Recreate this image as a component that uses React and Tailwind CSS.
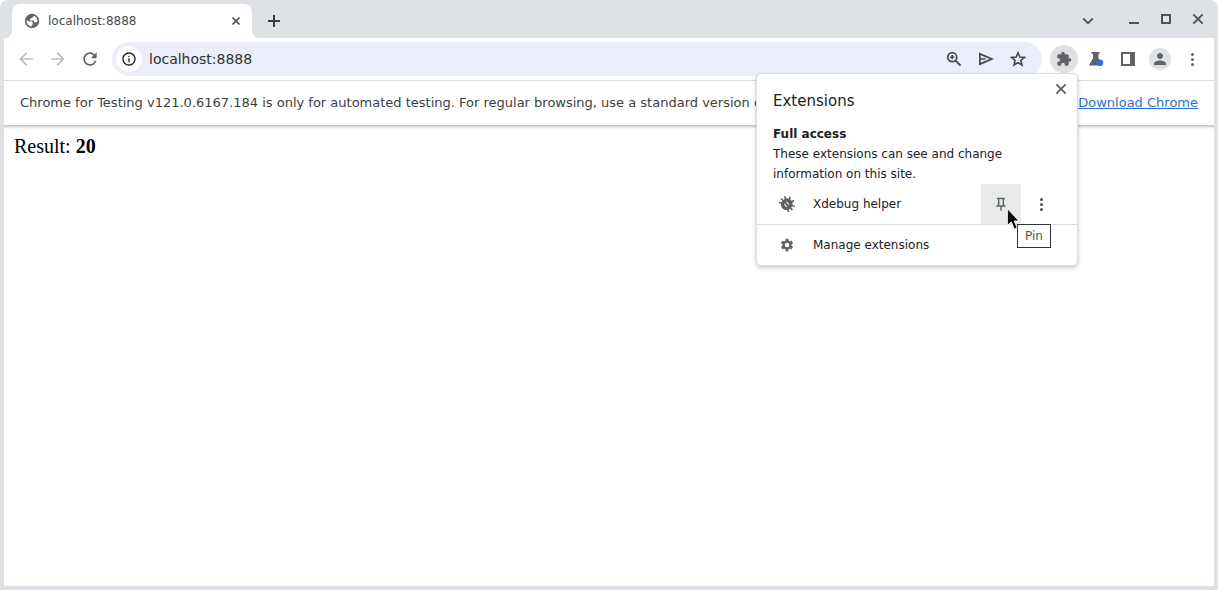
import React from "react";
import {
  MdArrowBack, MdArrowForward, MdExtension, MdInfoOutline,
  MdPerson, MdRefresh,
} from "react-icons/md";

function CloseIcon({ small }) {
  return (
    <svg viewBox="0 0 16 16" className="size-4" fill="none" stroke="currentColor" strokeWidth={small ? 1.6 : 1.9} aria-hidden="true">
      <path d={small ? "M4.500 4.500l7 7M11.500 4.500l-7 7" : "M3.300 3.300l9.400 9.400M12.700 3.300l-9.400 9.400"} />
    </svg>
  );
}

function PlusIcon() {
  return (
    <svg viewBox="0 0 16 16" className="size-4" fill="none" stroke="currentColor" strokeWidth="2" aria-hidden="true">
      <path d="M8 2v12M2 8h12" />
    </svg>
  );
}

function ChevronIcon() {
  return (
    <svg viewBox="0 0 16 16" className="size-4" fill="none" stroke="currentColor" strokeWidth="1.800" aria-hidden="true">
      <path d="M3.200 5.500 8 10.200l4.800-4.700" />
    </svg>
  );
}

function DotsIcon() {
  return (
    <svg viewBox="0 0 16 16" className="size-4" fill="currentColor" aria-hidden="true">
      <circle cx="8.500" cy="3.500" r="1.500" />
      <circle cx="8.500" cy="8.500" r="1.500" />
      <circle cx="8.500" cy="13.500" r="1.500" />
    </svg>
  );
}

function GlobeIcon() {
  return (
    <svg viewBox="0 0 16 16" className="size-4" aria-hidden="true">
      <circle cx="8" cy="8" r="7.200" fill="#5f6368" />
      <path d="M9.800 2.700c0 1.200-.8 1.800-2.200 1.800-.2 1-.8 1.500-1.900 1.600v1.500h3c1 0 1.500.7 1.500 1.700h1.700c1 0 1.500-.5 1.500-1.500 0-2.300-1.500-4.300-3.600-5.100zM2.600 7.200c-.3 3.100 1.800 5.900 5.200 6.200v-1.700h.9V9.900c0-.9-.6-1.300-1.500-1.300H5.400z" fill="#fff" />
    </svg>
  );
}

function ZoomIcon() {
  return (
    <svg viewBox="0 0 16 16" className="size-4" fill="none" stroke="#474747" strokeWidth="1.700" aria-hidden="true">
      <circle cx="6.200" cy="6.200" r="4.500" />
      <path d="m9.600 9.600 5 5" strokeWidth="2" />
      <path d="M6.200 4.100v4.200M4.100 6.200h4.200" strokeWidth="1.500" />
    </svg>
  );
}

function SendIcon() {
  return (
    <svg viewBox="0 0 16 16" className="size-4" fill="none" stroke="#474747" strokeWidth="1.700" aria-hidden="true">
      <path d="M1.900 2.900 13.800 8 1.900 13.100zM2 8h5.500" />
    </svg>
  );
}

function StarIcon() {
  return (
    <svg viewBox="0 0 16 16" className="size-4" fill="none" stroke="#474747" strokeWidth="1.600" aria-hidden="true">
      <path d="m8 1.800 1.800 4.200 4.700.4-3.600 3.100 1.100 4.500L8 11.600 4 14l1.100-4.500-3.600-3.100L6.200 6z" />
    </svg>
  );
}

function FlaskIcon() {
  return (
    <svg viewBox="0 0 16 16" className="size-4" aria-hidden="true">
      <path d="M3.500 1h8v1.800h-1v4.200L14 14.500H1L5 7V2.800H3.500z" fill="#5f6368" />
      <circle cx="12" cy="11.800" r="3.200" fill="#1a73e8" />
    </svg>
  );
}

function PanelIcon() {
  return (
    <svg viewBox="0 0 16 16" className="size-4" aria-hidden="true">
      <path fillRule="evenodd" d="M1 1h14v14H1zM3 3v10h7V3z" fill="#5f6368" />
    </svg>
  );
}

function BugIcon() {
  return (
    <svg viewBox="0 0 16 16" className="size-4" aria-hidden="true">
      <g transform="rotate(45 8 8)">
        <path d="M5.500.6 6.500 4M10.500.6 9.500 4M.8 4.200 3.500 5.500h9l2.700-1.300M0 8.300h16M1 12.800l2.500-1.700h9l2.500 1.700" stroke="#606060" strokeWidth="1.600" fill="none" />
        <rect x="2.500" y="2.300" width="11" height="12" rx="5.500" fill="#606060" />
        <path d="M6 7h4M6 10h4" stroke="#e8e8e8" strokeWidth="1.100" />
      </g>
    </svg>
  );
}

function GearIcon() {
  return (
    <svg viewBox="0 0 16 16" className="size-4" aria-hidden="true">
      <g stroke="#5f6368" fill="none">
        <circle cx="8" cy="8" r="3.400" strokeWidth="2.400" />
        <path d="M8 1.800v2.400M8 11.800v2.400M2.630 4.900l2.080 1.200M11.290 9.900l2.080 1.200M2.630 11.100l2.080-1.200M11.290 6.100l2.080-1.200" strokeWidth="3" />
      </g>
    </svg>
  );
}

function PinIcon() {
  return (
    <svg viewBox="0 0 16 16" className="size-4" fill="none" stroke="#606367" strokeWidth="1.500" aria-hidden="true">
      <path d="M4 2.600h8M5.700 2.600v5.800L4.400 9.900h7.200l-1.300-1.500V2.600M8 10v4.500" />
    </svg>
  );
}

function Cursor() {
  return (
    <svg viewBox="0 0 12 22" className="pointer-events-none absolute left-[26px] top-[24px] z-20 h-[22px] w-3" aria-hidden="true">
      <path d="M.6 1v16.300l3.700-3.500 3 7.200 2.800-1.200-3-6.900h4.700z" fill="#000" stroke="#fff" strokeWidth=".8" />
    </svg>
  );
}

function ExtensionsMenu() {
  return (
    <section aria-label="Extensions" className="absolute right-0 top-7 z-10 w-[322px] rounded-[5px] border border-[#dcdde0] bg-white text-xs text-[#202124] shadow-[0_2px_4px_rgba(0,0,0,0.22)]">
      <button aria-label="Close" className="absolute right-2 top-[7px] grid size-4 place-items-center text-[#5f6368]">
        <CloseIcon />
      </button>
      <h2 className="px-4 pt-[17px] text-[15px] leading-5">Extensions</h2>
      <div className="px-4 pt-[13px] leading-5">
        <h3 className="font-bold">Full access</h3>
        <p className="w-60">These extensions can see and change information on this site.</p>
      </div>
      <div className="flex h-10 items-center pl-[22px] pr-4">
        <button className="flex flex-1 items-center gap-[18px] text-left"><BugIcon />Xdebug helper</button>
        <div className="relative">
          <button aria-label="Pin" className="grid size-10 place-items-center bg-[#e9ebeb]"><PinIcon /></button>
          <Cursor />
          <div role="tooltip" className="absolute left-9 top-10 z-10 flex h-6 w-[34px] items-center justify-center border border-[#333] bg-white text-[#4d5156]">Pin</div>
        </div>
        <button aria-label="More options" className="grid size-10 place-items-center text-[#4d5156]"><DotsIcon /></button>
      </div>
      <button className="flex h-[41px] w-full items-center gap-[18px] border-t border-[#dadce0] pl-[22px] text-left">
        <GearIcon />
        Manage extensions
      </button>
    </section>
  );
}

function TabStrip() {
  return (
    <header className="flex h-[38px] items-end">
      <div className="relative ml-2 flex h-[34px] w-60 items-center rounded-t-lg bg-white pl-3 pr-2 text-xs text-[#45494d]">
        <span className="absolute -left-2 bottom-0 size-2 bg-[radial-gradient(circle_at_0_0,#dee1e6_8px,white_8px)]" />
        <span className="absolute -right-2 bottom-0 size-2 bg-[radial-gradient(circle_at_100%_0,#dee1e6_8px,white_8px)]" />
        <GlobeIcon />
        <span className="ml-2 flex-1">localhost:8888</span>
        <button aria-label="Close tab" className="grid size-4 place-items-center"><CloseIcon small /></button>
      </div>
      <button aria-label="New tab" className="mb-2 ml-[13px] grid size-[18px] place-items-center text-[#3c4043]"><PlusIcon /></button>
      <div className="ml-auto flex h-[38px] items-center text-[#505357]">
        <button aria-label="Search tabs" className="mr-[33px] mt-1 grid size-4 place-items-center"><ChevronIcon /></button>
        <button aria-label="Minimize" className="mr-[22px] mt-2 h-[2px] w-[10px] bg-[#505357]" />
        <button aria-label="Maximize" className="mr-[19px] size-[10px] border-2 border-[#505357]" />
        <button aria-label="Close window" className="mr-2 grid size-4 place-items-center"><CloseIcon /></button>
      </div>
    </header>
  );
}

export default function App() {
  return (
    <div className="bg-white font-['DejaVu_Sans','Liberation_Sans',sans-serif]">
      <div className="flex min-h-screen flex-col rounded-t-lg bg-[#dee1e6] px-1 pb-1">
        <TabStrip />
        <nav aria-label="Browser toolbar" className="flex h-[43px] items-center border-b border-[#dadce0] bg-white pl-3 pr-[14px] text-[#5f6368]">
          <button aria-label="Back" className="mr-3 text-[#babcbe]"><MdArrowBack className="size-5" /></button>
          <button aria-label="Forward" className="mr-3 text-[#babcbe]"><MdArrowForward className="size-5" /></button>
          <button aria-label="Reload" className="mr-3"><MdRefresh className="size-5" /></button>
          <div className="flex h-[34px] min-w-0 flex-1 items-center rounded-full bg-[#ebeef8] pl-1 pr-4 text-[#474747]">
            <button aria-label="Site information" className="grid size-[26px] place-items-center rounded-full bg-white text-[#202124]"><MdInfoOutline className="size-4" /></button>
            <input aria-label="Address" defaultValue="localhost:8888" className="ml-[7px] min-w-0 flex-1 bg-transparent text-sm text-[#303134] outline-none" />
            <div className="flex items-center gap-4">
              <button aria-label="Zoom"><ZoomIcon /></button>
              <button aria-label="Share"><SendIcon /></button>
              <button aria-label="Bookmark"><StarIcon /></button>
            </div>
          </div>
          <div className="relative ml-2">
            <button aria-label="Extensions" className="grid size-7 place-items-center rounded-full bg-[#e0e0e0]"><MdExtension className="size-4" /></button>
            <ExtensionsMenu />
          </div>
          <button aria-label="Experiments" className="ml-[10px]"><FlaskIcon /></button>
          <button aria-label="Side panel" className="ml-4"><PanelIcon /></button>
          <button aria-label="Profile" className="ml-[13px] grid size-[22px] place-items-center rounded-full bg-[#dee1e6]"><MdPerson className="size-[18px]" /></button>
          <button aria-label="Menu" className="ml-[13px]"><DotsIcon /></button>
        </nav>
        <div className="flex h-11 items-center justify-between bg-white px-4 text-[13px] text-[#3c4043]">
          <p className="truncate">Chrome for Testing v121.0.6167.184 is only for automated testing. For regular browsing, use a standard version of Chrome that automatically updates.</p>
          <a href="#download" className="shrink-0 text-[#2b6fcf] underline">Download Chrome</a>
        </div>
        <main className="flex-1 bg-white bg-linear-to-b from-[#c4c4c4] to-white bg-[length:100%_4px] bg-no-repeat p-[10px] font-['Liberation_Serif',serif] text-[20px] leading-[23px] text-black">
          Result: <b>20</b>
        </main>
      </div>
    </div>
  );
}
